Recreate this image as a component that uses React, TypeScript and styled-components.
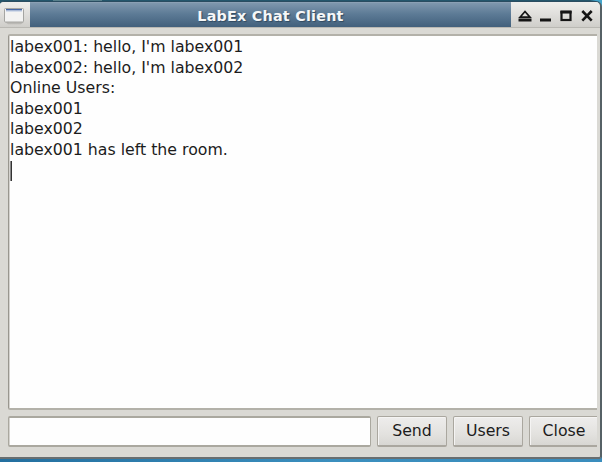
import React from 'react';
import styled, { createGlobalStyle } from 'styled-components';

const Global = createGlobalStyle`
  * { box-sizing: border-box; }
  html, body { margin: 0; width: 602px; height: 462px; overflow: hidden; }
  body { font-family: 'DejaVu Sans', sans-serif; color: #1c1c1c; }
`;

const Desktop = styled.div`
  width: 602px;
  height: 462px;
  padding-top: 1px;
  overflow: hidden;
  background:
    linear-gradient(to right, #24566c 53px, #58808c 53px 102px, #24566c 102px 590px, #43a5cc 596px) top / 100% 8px no-repeat,
    linear-gradient(to right, #236f9f, #3b8fbe 55%, #3a8dbd);
`;

const Window = styled.div`
  height: 458px;
  display: flex;
  flex-direction: column;
  background: #dad9d4;
  border-top: 1px solid #2a4c60;
  border-right: 2px solid #566166;
  border-bottom: 2px solid #686e70;
  border-radius: 4px 6px 3px 0;
  overflow: hidden;
`;

const TitleBar = styled.header`
  height: 26px;
  flex: none;
  display: flex;
  border-bottom: 1px solid #b9b8b3;
  background: linear-gradient(#eeeeec, #e1e0dd 45%, #cfceca);
`;

const MenuButton = styled.div`
  width: 30px;
  padding: 5px 0 0 4px;
`;

const Title = styled.h1`
  width: 481px;
  margin: 0;
  border-top: 1px solid #8ba0b4;
  background: linear-gradient(#7f97ad, #5d7b96 45%, #42607c);
  color: #f5f7f8;
  font-size: 14.3px;
  letter-spacing: 0.25px;
  line-height: 26px;
  text-align: center;
  text-shadow: 1px 1px 1px #304960;
`;

const Controls = styled.div`
  flex: 1;
  svg { display: block; }
`;

const Content = styled.main`
  flex: 1;
  display: flex;
  flex-direction: column;
  gap: 6px;
  padding: 6px 3px 11px 8px;
`;

const Transcript = styled.div`
  height: 376px;
  flex: none;
  padding: 1px 0 0 1px;
  background: #fefefe;
  border: 2px solid #b3b1a9;
  border-left: 1px solid #99978f;
  border-right: 0;
  border-radius: 2px 0 0 2px;
  box-shadow: inset 1px 0 #d5d3cf;
  font-size: 15.75px;
  line-height: 20.6px;
  white-space: pre;
`;

const Message = styled.div`
  height: 20.6px;
`;

const Caret = styled.div`
  width: 2px;
  height: 20px;
  background: linear-gradient(to right, #888 1px, #333 1px);
`;

const Controlbar = styled.div`
  display: flex;
  height: 31px;
  flex: none;
  overflow: hidden;
`;

const Input = styled.input`
  width: 363px;
  height: 31px;
  flex: none;
  padding: 0 4px;
  border: 1px solid #aaa89f;
  border-top-width: 2px;
  border-bottom-width: 2px;
  border-radius: 2px;
  box-shadow: inset 1px 0 #d5d3cf;
  background: #fefefe;
  font: 15.75px 'DejaVu Sans', sans-serif;
  outline: 0;
`;

const Button = styled.button<{ $clipped?: boolean }>`
  width: ${p => (p.$clipped ? 68 : 70)}px;
  height: 31px;
  margin-left: 6px;
  padding: 0 0 1px ${p => (p.$clipped ? 1 : 0)}px;
  flex: none;
  border: 1px solid #aaa79f;
  border-bottom-width: 2px;
  border-right-width: ${p => (p.$clipped ? 0 : 1)}px;
  border-radius: ${p => (p.$clipped ? '2px 0 0 2px' : '2px')};
  background: linear-gradient(#eeedec, #e3e2df 60%, #d8d7d3);
  box-shadow: inset 1px 1px #f5f4f3;
  color: #1c1c1c;
  font: 15.75px 'DejaVu Sans', sans-serif;
`;

const messages = [
  "labex001: hello, I'm labex001",
  "labex002: hello, I'm labex002",
  'Online Users:',
  'labex001',
  'labex002',
  'labex001 has left the room.',
];

export default function App() {
  return (
    <Desktop>
      <Global />
      <Window>
        <TitleBar>
          <MenuButton>
            <svg width="22" height="18" viewBox="0 0 22 18">
              <path d="M1 15H20L17 17.3H4Z" fill="#bab9b5" />
              <rect x="0.5" y="1.5" width="19" height="13.5" rx="1" fill="#f3f3f2" stroke="#a5a5a2" />
              <path d="M2 2.7H18" stroke="#4768a6" strokeWidth="1.5" />
              <path d="M2 4H18" stroke="#b6c5df" />
            </svg>
          </MenuButton>
          <Title>LabEx Chat Client</Title>
          <Controls>
            <svg width="88" height="26" viewBox="511 2 88 26" fill="none" stroke="#151515">
              <path d="M520 17.2L525 11.5L530 17.2Z" strokeWidth="1.7" />
              <path d="M518.5 20H531.5M540 20H551" strokeWidth="2.8" />
              <rect x="561.5" y="12" width="9" height="8" strokeWidth="2.2" />
              <path d="M560.4 12H571.6" strokeWidth="2.8" />
              <path d="M582.3 11L591.7 20.7M591.7 11L582.3 20.7" strokeWidth="2.6" />
            </svg>
          </Controls>
        </TitleBar>
        <Content>
          <Transcript>
            {messages.map(m => <Message key={m}>{m}</Message>)}
            <Caret />
          </Transcript>
          <Controlbar>
            <Input aria-label="Message" />
            <Button>Send</Button>
            <Button>Users</Button>
            <Button $clipped>Close</Button>
          </Controlbar>
        </Content>
      </Window>
    </Desktop>
  );
}
